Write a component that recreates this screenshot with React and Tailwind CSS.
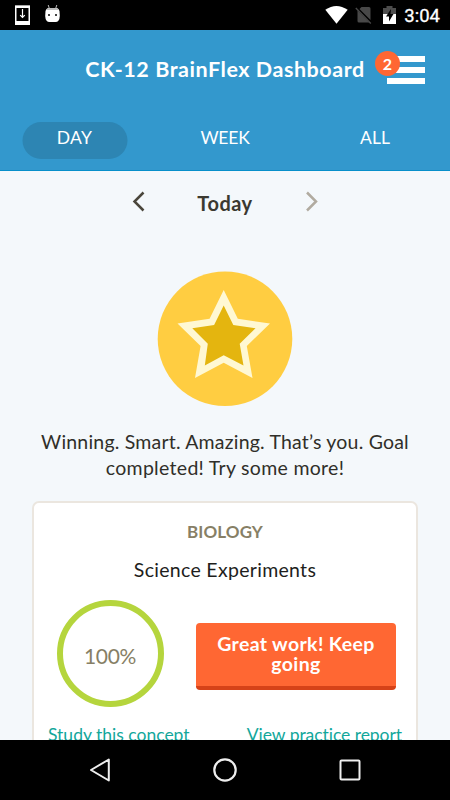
function StatusBar() {
  return (
    <div className="flex h-[30px] shrink-0 items-start bg-black pl-[15px] pr-[10px]">
      <svg className="mt-[5px] h-5 w-[15px]" viewBox="0 0 15 20">
        <path d="M0 0h15v20H0z" fill="#fff" />
        <path d="M1.500 3h12v13h-12z" fill="#000" />
        <path d="M0 0h15v1H0z" fill="#aaa" />
        <path d="M7.500 4v8M5.200 10.200l2.300 2.300 2.300-2.300" stroke="#fff" strokeWidth="1.200" fill="none" />
      </svg>
      <svg className="ml-[15px] mt-[5px] h-[18px] w-[15px]" viewBox="0 0 15 18">
        <path d="M3.200 0l1.300 4M11.800 0l-1.300 4" stroke="#bbb" strokeWidth="1" />
        <path d="M.5 6Q1.500 3 4 3h7q2.500 0 3.500 3l.3 5q-.3 6-4.300 6H4.500Q.5 17 .2 11z" fill="#fff" />
        <path d="M1.200 5Q2 3 4 3h7q2 0 2.800 2z" fill="#bbb" />
        <path d="M3 9h2v2H3zM10 9h2v2h-2z" fill="#444" />
      </svg>
      <svg className="ml-auto mt-[6px] h-[18px] w-[23px]" viewBox="0 0 23 18">
        <path d="M.3 3.800Q11.300-3.800 22.700 3.800L11.500 17.700z" fill="#fff" />
      </svg>
      <svg className="ml-[7px] mt-[6px] h-[18px] w-[17px]" viewBox="0 0 17 18">
        <path d="M6.500 1H14q1.500 0 1.500 1.500V14L4.500 3zM2.500 4.500L14.300 16.500H4q-1.500 0-1.500-1.500z" fill="#484848" />
        <path d="M.8 2l15 15.500" stroke="#484848" strokeWidth="1.400" />
      </svg>
      <svg className="ml-[11px] mt-[6px] h-[18px] w-[13px]" viewBox="0 0 13 18">
        <path d="M0 2h3.500V0h6v2H13v6H0z" fill="#4d4d4d" />
        <path d="M0 8h13v10H0z" fill="#fff" />
        <path d="M8 3L3 10.500h3V15.500L10.500 8H7.500z" fill="#000" />
      </svg>
      <span className="ml-[8px] mt-[5px] whitespace-nowrap font-[Roboto,sans-serif] text-[18.500px] leading-[22px] text-white [-webkit-text-stroke:0.300px_white]">3:04</span>
    </div>
  );
}

function Header() {
  return (
    <header className="flex h-[141px] shrink-0 flex-col border-b border-[#078fca] bg-[#3398cd] text-white">
      <div className="flex h-[79px] pl-[85px]">
        <h1 className="mt-[25px] w-[280px] whitespace-nowrap text-center text-[21.500px] font-bold leading-7 tracking-[0.550px]">CK-12 BrainFlex Dashboard</h1>
        <div className="relative ml-[22px] mt-[26px] flex h-[28px] w-[38px] flex-col gap-[5.500px]">
          <div className="h-[5.500px] bg-white" />
          <div className="h-[5.500px] bg-white" />
          <div className="h-[5.500px] bg-white" />
          <span className="absolute -left-[12px] -top-[5px] flex size-[25px] items-center justify-center rounded-full bg-[#ff6733] text-[16px] font-bold">2</span>
        </div>
      </div>
      <nav className="grid grid-cols-3 text-center text-[17.500px] leading-[32px]">
        <span className="mx-auto mt-[13px] h-[37px] w-[105px] -translate-x-[0.500px] rounded-full bg-[#2d85b3] tracking-[0.300px]">DAY</span>
        <span className="mt-[13px] tracking-[-0.200px]">WEEK</span>
        <span className="mt-[13px]">ALL</span>
      </nav>
    </header>
  );
}

function StarBadge() {
  return (
    <svg className="mx-auto size-[136px] shrink-0" viewBox="157 271 136 136">
      <circle cx="225" cy="338.800" r="67.300" fill="#ffcd41" />
      <path d="M223.700 290L237.800 318.800 270 323.500 246.800 346 252.500 378 223.700 362.800 195 378 200.600 346 177.500 323.500 209.600 318.800z" fill="#fff8d3" />
      <path d="M223.700 305.500L233.300 325 255.500 328.200 239.700 343.800 243.500 365.500 223.700 355.200 204.800 365.500 207.800 343.800 192.300 328.200 214.100 325z" fill="#e4b50f" />
    </svg>
  );
}

function ConceptCard() {
  return (
    <section className="mx-[32px] flex h-[280px] shrink-0 flex-col rounded-[7px] border-2 border-[#ebe6df] bg-white">
      <h2 className="mt-[17px] text-center text-[17px] font-bold leading-6 tracking-[0.100px] text-[#877f66]">BIOLOGY</h2>
      <p className="mt-[14px] text-center text-[19.500px] leading-6 tracking-[0.300px] text-[#1e1e1c]">Science Experiments</p>
      <div className="mt-[18px] flex">
        <div className="ml-[22.500px] flex size-[107px] items-center justify-center rounded-full border-[6px] border-[#b5d53d] pt-[4px] text-[21px] tracking-[-0.300px] text-[#877f66]">100%</div>
        <button className="ml-[32.500px] mt-[23px] h-[67px] w-[200px] rounded-[4px] border-b-4 border-[#d64218] bg-[#ff6733] pb-[2px] text-[19.500px] font-bold leading-5 tracking-[0.350px] text-white">Great work! Keep<br />going</button>
      </div>
      <div className="mt-[16px] flex justify-between px-[14px] text-[17.500px] leading-6 text-[#12a79b]">
        <span>Study this concept</span>
        <span className="tracking-[-0.050px]">View practice report</span>
      </div>
    </section>
  );
}

function NavigationBar() {
  return (
    <div className="flex h-[60px] shrink-0 items-center justify-between bg-black px-[88px]">
      <svg className="size-6" viewBox="0 0 24 24" fill="none" stroke="#eee" strokeWidth="2" strokeLinejoin="round"><path d="M20.800 1.500v21L3 12z" /></svg>
      <svg className="size-6" viewBox="0 0 24 24" fill="none" stroke="#eee" strokeWidth="2.200"><circle cx="12" cy="12" r="10.700" /></svg>
      <svg className="size-6" viewBox="0 0 24 24" fill="none" stroke="#eee" strokeWidth="2"><rect x="2.500" y="2.500" width="19" height="19" rx="1" /></svg>
    </div>
  );
}

export default function App() {
  return (
    <div className="flex h-[800px] w-[450px] flex-col overflow-hidden bg-[#f4f8fb] font-[Lato,'Open_Sans',sans-serif]">
      <StatusBar />
      <Header />
      <main className="flex h-[569px] shrink-0 flex-col overflow-hidden">
        <div className="flex h-[100px] shrink-0 justify-center pt-[19px] text-[#3b3930]">
          <svg className="h-6 w-[14px]" viewBox="0 0 14 24" fill="none" stroke="#4a463b" strokeWidth="2.500"><path d="M11.500 2.500l-9 9 9 9" /></svg>
          <span className="w-[159px] text-center text-[20px] font-bold leading-[26px] tracking-[0.500px]">Today</span>
          <svg className="h-6 w-[14px]" viewBox="0 0 14 24" fill="none" stroke="#b1aba0" strokeWidth="2.500"><path d="M2 2.500l9 9-9 9" /></svg>
        </div>
        <StarBadge />
        <p className="mb-[20px] mt-[22px] text-center text-[19.500px] leading-[26px] tracking-[0.200px] text-[#302f29]">Winning. Smart. Amazing. That’s you. Goal<br /><span className="tracking-[0.300px]">completed! Try some more!</span></p>
        <ConceptCard />
      </main>
      <NavigationBar />
    </div>
  );
}
